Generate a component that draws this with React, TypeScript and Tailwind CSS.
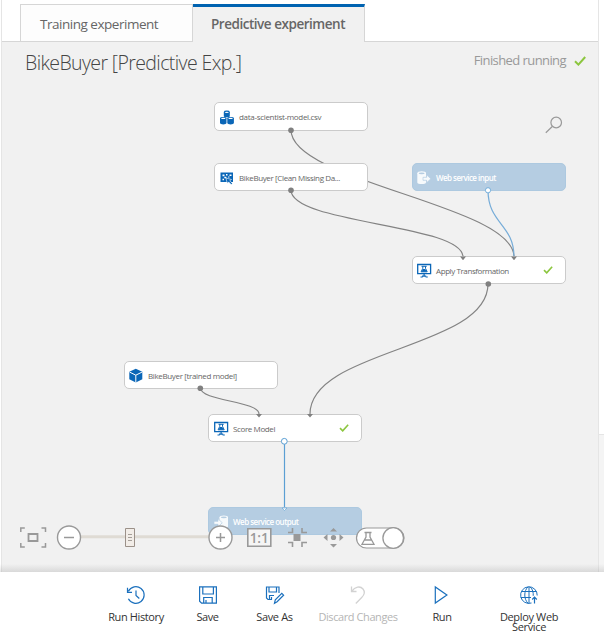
import React from "react";

const FONT = "font-['Open_Sans','Noto_Sans',sans-serif]";

function Check({ className = "" }: { className?: string }) {
  return (
    <svg className={className} viewBox="0 0 12 10" fill="none" stroke="#8cc63f" strokeWidth="2">
      <path d="M1 5.2 4.4 8.6 11.2 1" />
    </svg>
  );
}

function DatasetIcon() {
  return (
    <svg width="14" height="15" viewBox="0 0 14 15">
      <g fill="#0a66b7">
        <path d="M3.800 2v4.200c0 1.400 6 1.400 6 0V2Z" />
        <ellipse cx="6.800" cy="2" rx="3" ry="1.400" />
        <path d="M0 8.200v4.900c0 1.800 6.500 1.800 6.500 0V8.200Z" />
        <ellipse cx="3.250" cy="8.200" rx="3.250" ry="1.300" />
        <path d="M7.300 8.200v4.900c0 1.800 6.600 1.800 6.600 0V8.200Z" />
        <ellipse cx="10.600" cy="8.200" rx="3.300" ry="1.300" />
      </g>
      <g fill="#fff">
        <ellipse cx="6.800" cy="2.300" rx="2" ry=".6" />
        <ellipse cx="3.300" cy="8.400" rx="2.200" ry=".6" />
        <ellipse cx="10.600" cy="8.400" rx="2.200" ry=".6" />
      </g>
    </svg>
  );
}

function TransformIcon() {
  return (
    <svg width="14" height="14" viewBox="0 0 14 14">
      <path d="M.5 1.500H13V11H.5Z" fill="#0a66b7" />
      <path d="M2.500 3.500h2v1.800h-2ZM6 3h1.500v1.500H6ZM9.500 3.500h2V5h-2ZM4.300 5.800h2v1.500h-2ZM2.500 7.800H4v1.500H2.500ZM8 5.500h1.500v1H8Z" fill="#fff" />
      <path d="M6 7 11.500 8.500 9.800 9.700 12.400 12.400 11.200 13.600 8.600 10.900 7.200 12.300Z" fill="#0a66b7" stroke="#fff" strokeWidth=".6" />
    </svg>
  );
}

function CubeIcon() {
  return (
    <svg width="14" height="15" viewBox="0 0 14 15">
      <path d="M6.800.8 13.300 3.700V11.300L6.800 14.600.3 11.300V3.700Z" fill="#0a66b7" />
      <path d="M.6 4.100 6.800 7.200 13 4.100M6.800 7.200v7.500" fill="none" stroke="#fff" strokeWidth="1" />
    </svg>
  );
}

function ModuleIcon() {
  return (
    <svg width="15" height="15" viewBox="0 0 15 15" fill="none" stroke="#0a66b7">
      <path d="M.7 1.500h12.900v9.200H.7Z" strokeWidth="1.300" />
      <path d="M7.100 10.500v2.300M3.500 14h2.200M8.600 14h2.200M5 13.100h4.200" strokeWidth="1.200" />
      <path d="M4.500 3.300h5.200M5.800 3.300v2L4.100 8.800h6.100L8.500 5.300v-2" strokeWidth="1" />
      <path d="M6 6h2.200L9.800 8.700H4.500Z" fill="#0a66b7" stroke="none" />
    </svg>
  );
}

function ServiceIcon({ output = false }: { output?: boolean }) {
  return output ? (
    <svg width="15" height="14" viewBox="0 0 15 14">
      <path d="M5.500 2v9.500c0 2 8.500 2 8.500 0V2Z" fill="#f7fafc" />
      <ellipse cx="9.800" cy="2.200" rx="4.200" ry="1.800" fill="#f7fafc" />
      <ellipse cx="9.800" cy="2.300" rx="3" ry=".9" fill="#b5cde2" />
      <path d="M0 6.300h4V3.800l4.300 4-4.300 4V9.300H0Z" fill="#f7fafc" stroke="#b5cde2" strokeWidth=".7" />
    </svg>
  ) : (
    <svg width="15" height="14" viewBox="0 0 15 14">
      <path d="M.3 2v9.500c0 2 8.700 2 8.700 0V2Z" fill="#f7fafc" />
      <ellipse cx="4.700" cy="2.200" rx="4.300" ry="1.900" fill="#f7fafc" />
      <ellipse cx="4.700" cy="2.300" rx="3" ry=".9" fill="#b5cde2" />
      <path d="M6 6.300h3.600V3.800l4.200 4-4.200 4V9.300H6Z" fill="#f7fafc" stroke="#b5cde2" strokeWidth=".7" />
    </svg>
  );
}

interface NodeProps {
  place: string;
  label: string;
  icon: React.ReactNode;
  service?: boolean;
  done?: boolean;
  tracking: string;
}

function Node({ place, label, icon, service, done, tracking }: NodeProps) {
  return (
    <div
      className={`absolute flex w-[154px] items-center rounded-[5px] border ${place} ${
        service ? "border-[#adc9e0] bg-[#b5cde2] text-white" : "border-[#cbcbcb] bg-white text-[#666]"
      }`}
    >
      <span className="flex w-[15px] shrink-0 pt-px">{icon}</span>
      <span
        className={`ml-1 whitespace-nowrap pt-px text-[8px] leading-none ${tracking} ${service ? "font-semibold" : ""}`}
      >
        {label}
      </span>
      {done && <Check className="mr-3 ml-auto h-2 w-[10px]" />}
    </div>
  );
}

function Edges() {
  return (
    <svg className="absolute inset-0" width="604" height="572" fill="none" stroke="#838383" strokeWidth="1.200">
      <path d="M291 130C291 182 514 205 514 257" />
      <path d="M291 190C291 224 463 224 463 257" />
      <path d="M488 190C488 224 514 224 514 257" stroke="#76acd8" />
      <path d="M488 284C488 349 310 349 310 414" />
      <path d="M200.500 388C200.500 401 259 401 259 414" />
      <path d="M284.500 441V509" stroke="#5b9fd4" />
    </svg>
  );
}

function Ports() {
  return (
    <svg className="absolute inset-0" width="604" height="572">
      <g fill="#808080">
        <circle cx="291" cy="130.200" r="2.800" />
        <circle cx="291" cy="190.300" r="2.800" />
        <circle cx="488.300" cy="284" r="2.800" />
        <circle cx="200.300" cy="388.300" r="2.800" />
        <path d="M460 256.500h6l-3 3.700ZM511 256.500h6l-3 3.700ZM256 414h6l-3 3.500ZM307 414h6l-3 3.500Z" />
      </g>
      <g fill="#fff" stroke="#5b9fd4">
        <circle cx="488" cy="190.300" r="2.600" strokeWidth=".8" />
        <circle cx="284.300" cy="441.300" r="2.900" />
        <path d="M282 508h5l-2.500 2.500Z" strokeWidth=".6" />
      </g>
    </svg>
  );
}

function CanvasControls() {
  return (
    <svg className="absolute top-[520px] left-0" width="420" height="36" fill="none" stroke="#999">
      <g strokeWidth="1.500">
        <path d="M20.800 12v-4h4M41.500 8h4v4M45.500 23v4h-4M24.800 27h-4v-4" />
        <path d="M28.500 14h9v7h-9Z" strokeWidth="1.800" />
      </g>
      <path d="M80 16.800h130" stroke="#dfdbd4" strokeWidth="3" />
      <circle cx="69" cy="17.500" r="11.500" fill="#fff" strokeWidth="1.400" />
      <path d="M64 17.500h10" strokeWidth="1.500" />
      <path d="M125.500 8.500h9v18h-9Z" fill="#f2ede8" stroke="#9b9189" />
      <path d="M128 14.500h4M128 17.500h4M128 20.500h4" stroke="#918a84" strokeWidth=".8" />
      <circle cx="220.500" cy="17.500" r="11.500" fill="#fff" strokeWidth="1.400" />
      <path d="M216 17.500h9M220.500 13v9" strokeWidth="1.500" />
      <path d="M247.800 8.700h23v17.600h-23Z" fill="#f5f5f5" strokeWidth="1.600" />
      <text
        x="259.200"
        y="22.600"
        textAnchor="middle"
        className="font-['Open_Sans',sans-serif] text-[13.5px] font-semibold"
        fill="#999"
        stroke="none"
      >
        1:1
      </text>
      <path d="M293.500 14h7v7h-7Z" fill="#999" stroke="none" />
      <path d="M288 12.500h4.500V8M302 8v4.500h5M307 22.500h-5V27M292.500 27v-4.500H288" strokeWidth="1.600" />
      <g fill="#999" stroke="none">
        <circle cx="333.500" cy="17.500" r="2.600" />
        <path d="M333.500 8l3.500 3.500h-7ZM333.500 27.500l3.500-3.500h-7ZM323.500 17.500l4-3.500v7ZM343.500 17.500l-4-3.500v7Z" />
      </g>
      <rect x="356.500" y="8" width="47.500" height="20" rx="10" fill="#fff" strokeWidth="1.200" />
      <circle cx="393.200" cy="18" r="10.300" fill="#fff" strokeWidth="1.300" />
      <path d="M364.500 12.500h7M366 12.500v4.500l-4 7.300h12l-4-7.300v-4.500M364.500 20h7.200" strokeWidth="1.300" />
    </svg>
  );
}

function ActionIcon({ name }: { name: string }) {
  const color = name === "Discard Changes" ? "#d2d2d2" : "#1b70bd";
  return (
    <svg width="20" height="20" viewBox="0 0 20 20" fill="none" stroke={color} strokeWidth="1.200">
      {name === "Run History" && (
        <path d="M2.400 6.300A8.300 8.300 0 1 1 2.400 13.700M1.500 2.800v4.500H6M10 5.500v5l3.300 3" />
      )}
      {name === "Save" && (
        <path d="M1.600 1.800h16.800v16.400H3.600l-2-2ZM4.800 2v7h10.600V2M5.700 18v-5.500h8.500V18M8 15v3" />
      )}
      {name === "Save As" && (
        <>
          <path d="M7 14.500H3L1.500 13V2H14v6M4 2v5h7.500V2M4.500 14v-3.500H9M6.500 12v2.500" />
          <path d="m9.500 18.200.8-3.300 6.500-6.500 1.800 1.800-6.500 6.500Z" />
        </>
      )}
      {name === "Discard Changes" && (
        <path d="M3.500 1.500v5h5M3.700 6.300C7 1.600 12.200.7 15 4c2.400 3 1.200 6-1.300 8.500L7.800 18.500" strokeWidth="1.300" />
      )}
      {name === "Run" && <path d="M3.300 2v16L14.900 10Z" />}
      {name === "Deploy Web Service" && (
        <>
          <path d="M12.500 18A8.300 8.300 0 1 1 18.200 10.500M10 1.700v16.600M2.500 6.500h15M1.700 12.500H12M9 1.800C4.700 6 4.700 14 9 18.200M11 1.800c2.800 2.500 3.500 6 3.200 9" strokeWidth="1" />
          <path d="M15.500 18.500v-6M13.200 14.500l2.300-2.300 2.300 2.300" />
        </>
      )}
    </svg>
  );
}

const actions = [
  { name: "Run History", style: "w-[80px] tracking-[-0.37px]", label: "whitespace-nowrap" },
  { name: "Save", style: "w-[63px] tracking-[-0.5px]", label: "whitespace-nowrap" },
  { name: "Save As", style: "w-[71px] tracking-[-0.36px]", label: "whitespace-nowrap" },
  { name: "Discard Changes", style: "w-[96px] tracking-[-0.41px] text-[#b5b5b5]", label: "whitespace-nowrap" },
  { name: "Run", style: "w-[72px] tracking-[-0.4px]", label: "whitespace-nowrap" },
  { name: "Deploy Web Service", style: "w-[102px] tracking-[-0.35px]", label: "w-16" },
];

export default function App() {
  return (
    <div className={`flex h-[644px] w-[604px] flex-col overflow-hidden bg-white ${FONT}`}>
      <div className="relative flex h-[572px] shrink-0">
        <main className="ml-px flex w-[598px] flex-col border-x border-[#e5e5e5] bg-[#f1f1f1]">
          <nav className="flex h-[42px] shrink-0 bg-white pt-1 text-[13.5px] text-[#666]">
            <div className="w-[18px] border-b border-[#d6d6d6]" />
            <div className="flex w-[173px] items-center border border-[#d6d6d6] bg-[#fdfdfd] pt-[3px] pl-[19px]">
              <span className="whitespace-nowrap tracking-[-0.48px]">Training experiment</span>
            </div>
            <div className="flex w-[172px] items-center border-t-[3px] border-r border-t-[#0063b1] border-r-[#d6d6d6] bg-[#f1f1f1] pl-[18px]">
              <span className="whitespace-nowrap font-semibold tracking-[-0.47px]">Predictive experiment</span>
            </div>
            <div className="flex-1 border-b border-[#d6d6d6]" />
          </nav>
          <header className="flex h-[42px] items-center justify-between pr-3 pl-[23px]">
            <h1 className="whitespace-nowrap text-[19.5px] font-light tracking-[-0.6px] text-[#444]">
              BikeBuyer [Predictive Exp.]
            </h1>
            <div className="flex items-center gap-2 pb-1 text-[13px] tracking-[-0.58px] text-[#999]">
              <span>Finished running</span>
              <Check className="h-[10px] w-3" />
            </div>
          </header>
        </main>
        <aside className="flex flex-1 flex-col">
          <div className="h-[435px] border-b border-[#e5e5e5] bg-white" />
          <div className="flex-1 bg-[#f4f4f4]" />
        </aside>

        <Edges />
        <Node place="top-[102px] left-[214px] h-[29px] pl-[5px]" label="data-scientist-model.csv" icon={<DatasetIcon />} tracking="tracking-[-0.31px]" />
        <Node place="top-[163px] left-[214px] h-7 pl-[5px]" label="BikeBuyer [Clean Missing Da..." icon={<TransformIcon />} tracking="tracking-[-0.37px]" />
        <Node place="top-[163px] left-[412px] h-7 pl-1" label="Web service input" icon={<ServiceIcon />} service tracking="tracking-[-0.53px]" />
        <Node place="top-[256px] left-[412px] h-7 pl-1" label="Apply Transformation" icon={<ModuleIcon />} done tracking="tracking-[-0.41px]" />
        <Node place="top-[361px] left-[124px] h-7 pl-1" label="BikeBuyer [trained model]" icon={<CubeIcon />} tracking="tracking-[-0.35px]" />
        <Node place="top-[414px] left-[208px] h-7 pl-[5px]" label="Score Model" icon={<ModuleIcon />} done tracking="tracking-[-0.38px]" />
        <Node place="top-[507px] left-[208px] h-7 pl-[5px]" label="Web service output" icon={<ServiceIcon output />} service tracking="tracking-[-0.51px]" />
        <Ports />
        <CanvasControls />
        <svg className="absolute top-[116px] left-[545px]" width="18" height="18" fill="none" stroke="#999" strokeWidth="1.200">
          <circle cx="11.200" cy="6.500" r="5.300" />
          <path d="m7.300 10.500-6.500 6.200" />
        </svg>
        <div className="absolute inset-x-0 bottom-0 h-2 bg-linear-to-b from-transparent to-black/10" />
      </div>

      <footer className="flex flex-1 pt-[13px] pl-[96px] text-[11px] leading-[10px] text-[#333]">
        {actions.map((a) => (
          <button key={a.name} className={`flex shrink-0 flex-col items-center ${a.style}`}>
            <ActionIcon name={a.name} />
            <span className={`mt-[7px] ${a.label}`}>{a.name}</span>
          </button>
        ))}
      </footer>
    </div>
  );
}
